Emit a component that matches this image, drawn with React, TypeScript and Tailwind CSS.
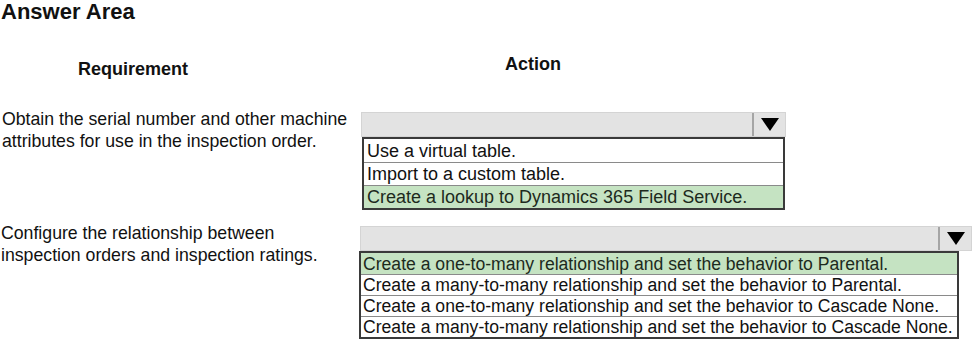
import React from "react";

type DropProps = {
  options: string[];
  selected: number;
  head: string;
  list: string;
  row: string;
};

function Dropdown({ options, selected, head, list, row }: DropProps) {
  return (
    <div className="flex flex-col">
      <div className={`flex h-[25px] border border-[#d4d4d4] bg-[#e3e3e3] ${head}`}>
        <div className="flex-1" />
        <div className="flex w-[33px] items-center justify-center border-l-2 border-[#a5a5a5]">
          <svg width="18" height="13" viewBox="0 0 18 13">
            <polygon points="0,0 18,0 9,13" fill="#000" />
          </svg>
        </div>
      </div>
      <div className={`border-2 border-[#3a3a3a] ${list}`}>
        {options.map((o, i) => (
          <div
            key={o}
            className={`flex items-center whitespace-nowrap ${row} ${i > 0 ? "border-t border-[#8a8a8a]" : ""} ${
              i === selected ? "bg-[#c5e3c2] text-[#1d2a1d]" : "bg-white text-[#111]"
            }`}
          >
            {o}
          </div>
        ))}
      </div>
    </div>
  );
}

export default function App() {
  return (
    <div
      className="w-[973px] h-[341px] overflow-hidden bg-white text-[#111]"
      style={{ fontFamily: '"Liberation Sans", Arial, sans-serif' }}
    >
      <h1 className="pl-[1px] text-[22px] leading-[24px] font-bold">Answer Area</h1>

      <div className="mt-[35px] flex text-[18px] leading-[20px] font-bold">
        <div className="w-[505px] pl-[78px]">Requirement</div>
        <div className="-mt-[5px]">Action</div>
      </div>

      {/* row 1 */}
      <div className="mt-[22px] flex text-[17.7px] leading-[22px]">
        <div className="mt-[7px] w-[361px] pl-[2px]">
          Obtain the serial number and other machine
          <br />
          attributes for use in the inspection order.
        </div>
        <div className="mt-[11px] text-[18px]">
          <Dropdown
            head="w-[425px]"
            list="ml-[1px] w-[423px]"
            row="h-[23px] pl-[3px]"
            selected={2}
            options={["Use a virtual table.", "Import to a custom table.", "Create a lookup to Dynamics 365 Field Service."]}
          />
        </div>
      </div>

      {/* row 2 */}
      <div className="mt-[2px] flex text-[17.7px] leading-[22px]">
        <div className="mt-[10px] w-[359px] pl-[1px]">
          Configure the relationship between
          <br />
          inspection orders and inspection ratings.
        </div>
        <div className="mt-[14px] text-[17.6px]">
          <Dropdown
            head="ml-[1px] w-[612px]"
            list="w-[600px]"
            row="h-[21px] pl-[2px]"
            selected={0}
            options={[
              "Create a one-to-many relationship and set the behavior to Parental.",
              "Create a many-to-many relationship and set the behavior to Parental.",
              "Create a one-to-many relationship and set the behavior to Cascade None.",
              "Create a many-to-many relationship and set the behavior to Cascade None.",
            ]}
          />
        </div>
      </div>
    </div>
  );
}
